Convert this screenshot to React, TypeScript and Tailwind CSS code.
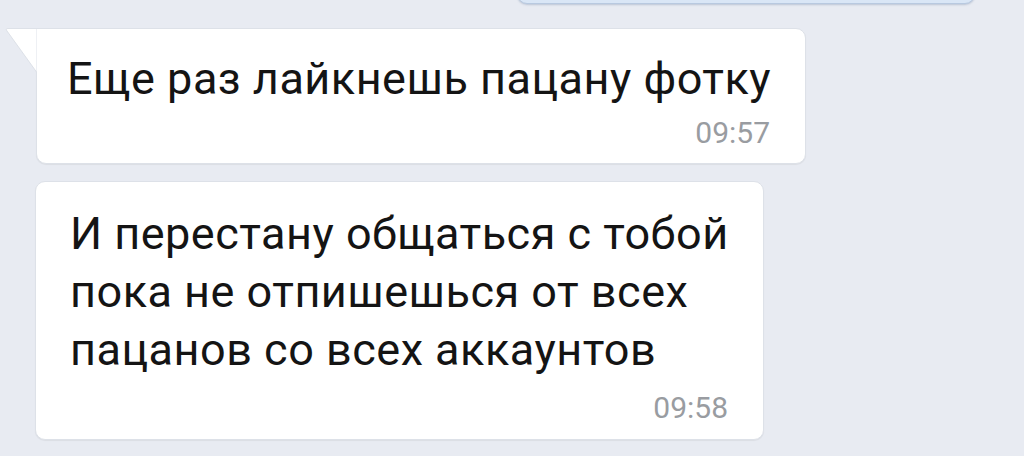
const Time = ({ t }: { t: string }) => (
  <div className="flex justify-end pr-[35px] text-[30px] leading-none text-[#999ca1]">
    {t}
  </div>
);

export default function App() {
  return (
    <div
      className="w-[1024px] h-[456px] overflow-hidden bg-[#e8ebf2] flex flex-col"
      style={{ fontFamily: 'Roboto, "Noto Sans", sans-serif' }}
    >
      <div className="ml-[517px] w-[458px] h-[40px] -mt-[36px] shrink-0 rounded-[10px] border border-[#b8c9e0] bg-[#d9e6f6] shadow-[0_1px_2px_rgba(120,140,170,0.4)]" />

      <div className="relative ml-[36px] mt-[24px] w-[770px] shrink-0 rounded-[10px] rounded-tl-none border border-[#dde1e8] bg-white pl-[30px] pt-[21px] pb-[15px] shadow-[0_1px_1px_rgba(0,0,0,0.06)]">
        <svg
          className="absolute -left-[32px] -top-[1px]"
          width="36"
          height="46"
          viewBox="0 0 36 46"
        >
          <path
            d="M33 0.5 L3 0.5 Q0 0.5 2 3 L31.5 44 L31.5 0.5 Z"
            fill="#ffffff"
          />
          <path
            d="M33 0.5 L3 0.5 Q0 0.5 2 3 L31.5 44"
            fill="none"
            stroke="#dde1e8"
            strokeWidth="1"
          />
        </svg>
        <div className="text-[45px] leading-[58px] tracking-[0.5px] text-[#141414]">
          Еще раз лайкнешь пацану фотку
        </div>
        <div className="mt-[10px]">
          <Time t="09:57" />
        </div>
      </div>

      <div className="ml-[35px] mt-[17px] w-[729px] shrink-0 rounded-[10px] border border-[#dde1e8] bg-white pl-[34px] pt-[23px] pb-[16px] shadow-[0_1px_1px_rgba(0,0,0,0.06)]">
        <div className="text-[45px] leading-[58px] tracking-[0.5px] text-[#141414]">
          <div>И перестану общаться с тобой</div>
          <div>пока не отпишешься от всех</div>
          <div>пацанов со всех аккаунтов</div>
        </div>
        <div className="mt-[14px]">
          <Time t="09:58" />
        </div>
      </div>
    </div>
  );
}
